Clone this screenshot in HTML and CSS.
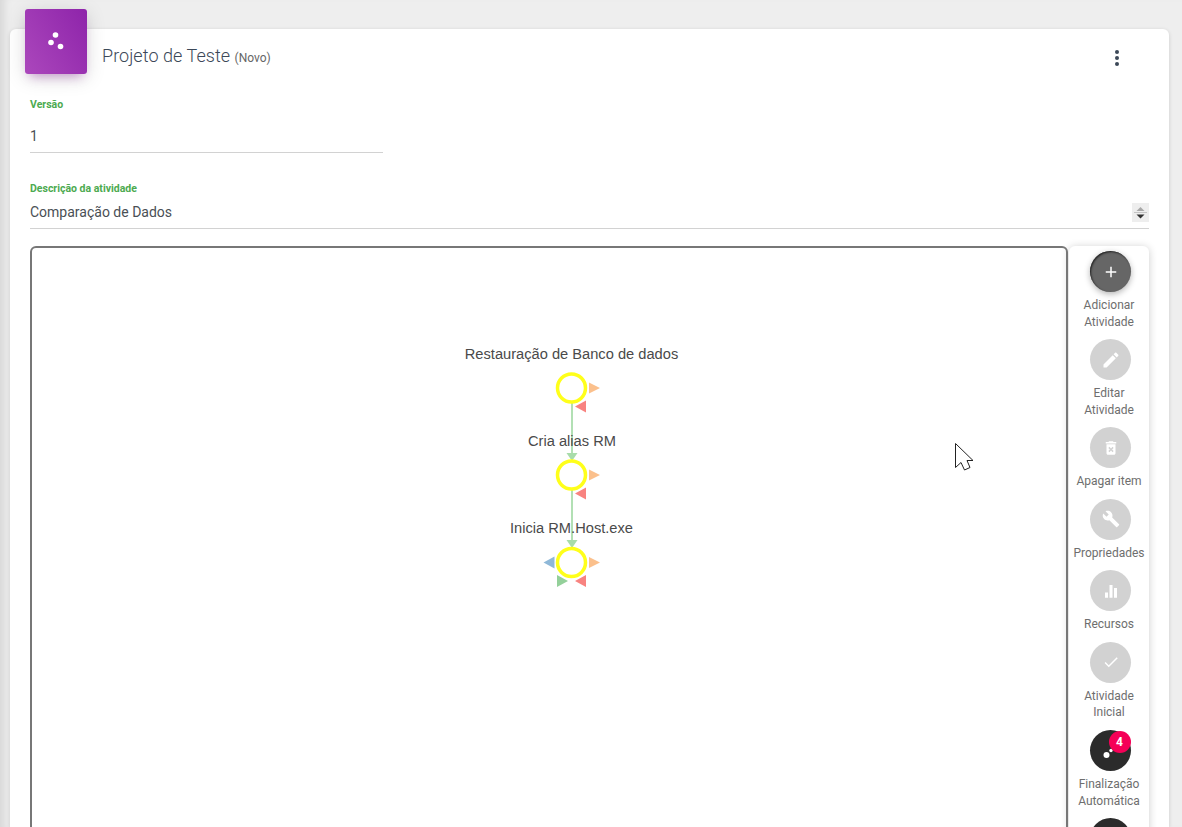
FILE: index.html
```html
<!DOCTYPE html>
<html lang="en">
<head>
    <meta charset="UTF-8">
    <meta name="viewport" content="width=device-width, initial-scale=1.0">
    <title>Projeto de Teste</title>
    <link rel="stylesheet" href="styles.css">
</head>
<body>
    <div class="card">
        <div class="card-header">
            <div class="logo">
                <svg width="62" height="65" viewBox="25 9 62 65">
                    <circle cx="55.500" cy="35" r="2.800" fill="#fff"/>
                    <circle cx="51" cy="42.500" r="2.800" fill="#fff"/>
                    <circle cx="60.500" cy="46.500" r="2.800" fill="#fff"/>
                </svg>
            </div>
            <h1 class="title">Projeto de Teste <small>(Novo)</small></h1>
            <div class="menu-dots"><span></span><span></span><span></span></div>
        </div>

        <div class="field field-version">
            <label>Versão</label>
            <div class="value">1</div>
        </div>

        <div class="field field-desc">
            <label>Descrição da atividade</label>
            <div class="value">Comparação de Dados</div>
            <svg class="spinner" width="17" height="19" viewBox="0 0 17 19">
                <rect width="17" height="19" fill="#eeeeee"/>
                <path d="M8.500 4l4 4h-8z" fill="#a8a8a8"/>
                <rect x="2" y="9" width="13" height="1" fill="#c4c4c4"/>
                <path d="M4.500 11.500h8l-4 4z" fill="#333"/>
            </svg>
        </div>

        <div class="workspace">
            <div class="canvas">
                <!-- viewBox uses page coordinates -->
                <svg class="graph" width="1034" height="579" viewBox="32 248 1034 579">
                    <path d="M572 403V455M572 490V542" class="edge"/>
                    <path d="M566.500 453h11l-5.500 8zM566.500 540h11l-5.500 8z" fill="#a8dcaa"/>

                    <text x="571.500" y="359" class="node-label">Restauração de Banco de dados</text>
                    <text x="572" y="446" class="node-label">Cria alias RM</text>
                    <text x="571.500" y="533" class="node-label">Inicia RM.Host.exe</text>

                    <circle cx="571.500" cy="388" r="14" class="node"/>
                    <circle cx="571.500" cy="475" r="14" class="node"/>
                    <circle cx="571.500" cy="562.500" r="14" class="node"/>

                    <path d="M589 382.500l11 5.500-11 5.500zM589 469.500l11 5.500-11 5.500zM589 557l11 5.500-11 5.500z" fill="#fbc08c"/>
                    <path d="M586 400.500v12l-11-6zM586 487.500v12l-11-6zM586 575v12l-11-6z" fill="#f88380"/>
                    <path d="M554.500 556.500v12l-11-6z" fill="#8fb8d8"/>
                    <path d="M557 575v12l11-6z" fill="#94d09a"/>

                    <path d="M955.500 443.500L973 460.500H967L970 467.500L964.500 470L961 462.500L955.500 467.500Z" fill="#fff" stroke="#222" stroke-width="1"/>
                </svg>
            </div>

            <div class="toolbar">
                <div class="tool">
                    <div class="tool-btn btn-add">
                        <svg width="18" height="18" viewBox="0 0 24 24"><path d="M19 13h-6v6h-2v-6H5v-2h6V5h2v6h6v2z"/></svg>
                    </div>
                    <span>Adicionar Atividade</span>
                </div>
                <div class="tool">
                    <div class="tool-btn">
                        <svg width="20" height="20" viewBox="0 0 24 24"><path d="M3 17.250V21h3.750L17.810 9.940l-3.750-3.750L3 17.250zM20.710 7.040c.39-.39.39-1.020 0-1.410l-2.340-2.340c-.39-.39-1.020-.39-1.410 0l-1.830 1.830 3.750 3.750 1.830-1.830z"/></svg>
                    </div>
                    <span>Editar Atividade</span>
                </div>
                <div class="tool">
                    <div class="tool-btn">
                        <svg width="18" height="18" viewBox="0 0 24 24"><path d="M6 19c0 1.100.9 2 2 2h8c1.100 0 2-.9 2-2V7H6v12zm2.460-7.120l1.410-1.410L12 12.590l2.120-2.120 1.410 1.410L13.410 14l2.120 2.120-1.410 1.410L12 15.410l-2.120 2.120-1.410-1.410L10.590 14l-2.130-2.120zM15.500 4l-1-1h-5l-1 1H5v2h14V4z"/></svg>
                    </div>
                    <span>Apagar item</span>
                </div>
                <div class="tool">
                    <div class="tool-btn">
                        <svg width="18" height="18" viewBox="0 0 24 24"><path d="M22.700 19l-9.100-9.100c.9-2.300.4-5-1.500-6.900-2-2-5-2.400-7.400-1.300L9 6 6 9 1.600 4.700C.4 7.100.9 10.100 2.900 12.100c1.900 1.900 4.600 2.400 6.900 1.500l9.100 9.100c.4.4 1 .4 1.400 0l2.300-2.300c.5-.4.5-1.100.1-1.400z"/></svg>
                    </div>
                    <span>Propriedades</span>
                </div>
                <div class="tool">
                    <div class="tool-btn">
                        <svg width="18" height="18" viewBox="0 0 24 24"><path d="M4 14h4v7H4zM10 4h4v17h-4zM16 8h4v13h-4z"/></svg>
                    </div>
                    <span>Recursos</span>
                </div>
                <div class="tool">
                    <div class="tool-btn">
                        <svg width="18" height="18" viewBox="0 0 24 24"><path d="M9 16.170L4.830 12l-1.420 1.410L9 19 21 7l-1.410-1.410z"/></svg>
                    </div>
                    <span>Atividade Inicial</span>
                </div>
                <div class="tool">
                    <div class="tool-btn btn-dark">
                        <svg width="41" height="41" viewBox="0 0 41 41">
                            <circle cx="16.500" cy="25" r="3"/>
                            <circle cx="21" cy="20.500" r="1.700"/>
                        </svg>
                        <b class="badge">4</b>
                    </div>
                    <span>Finalização Automática</span>
                </div>
                <div class="tool">
                    <div class="tool-btn btn-dark"></div>
                </div>
            </div>
        </div>
    </div>
</body>
</html>
```

FILE: styles.css
```css
html, body {
    height: 827px;
    overflow: hidden;
}

body {
    margin: 0;
    font-family: Roboto, sans-serif;
    background-color: #eeeeee;
    box-shadow: inset 10px 0 8px -6px rgba(0, 0, 0, 0.1);
}

.card {
    position: relative;
    margin: 0 13px 0 10px;
    top: 29px;
    height: 798px;
    padding: 0 20px;
    background: #ffffff;
    border-radius: 6px 6px 0 0;
    box-shadow: 0 1px 4px rgba(0, 0, 0, 0.14);
    box-sizing: border-box;
}

.card-header {
    display: flex;
    height: 68px;
    margin: 0 0 0 -5px;
}

.logo {
    width: 62px;
    height: 65px;
    margin-top: -20px;
    border-radius: 3px;
    background: linear-gradient(60deg, #ab47bc, #8e24aa);
    box-shadow: 0 4px 20px 0 rgba(0, 0, 0, 0.14), 0 7px 10px -5px rgba(156, 39, 176, 0.4);
}

.logo svg {
    display: block;
}

.title {
    margin: 16px 0 0 15px;
    font-size: 18px;
    line-height: 21px;
    font-weight: 300;
    letter-spacing: 0.05px;
    color: #3c4858;
}

.title small {
    font-size: 12px;
    color: #666666;
    font-weight: 400;
    letter-spacing: 0;
}

.menu-dots {
    display: flex;
    flex-direction: column;
    gap: 2px;
    margin: 21px 30px 0 auto;
}

.menu-dots span {
    width: 4px;
    height: 4px;
    border-radius: 50%;
    background: #3c4858;
}

.field {
    position: relative;
    border-bottom: 1px solid #d2d2d2;
    box-sizing: border-box;
}

.field label {
    display: block;
    font-size: 10.500px;
    line-height: 14px;
    font-weight: 700;
    color: #4caa50;
}

.field .value {
    font-size: 14px;
    color: #4a4f55;
}

.field-version {
    width: 353px;
    height: 56px;
    padding-top: 1px;
}

.field-version .value {
    margin-top: 8px;
    line-height: 32px;
}

.field-desc {
    height: 47px;
    margin-top: 29px;
}

.field-desc .value {
    margin-top: 1px;
    line-height: 30px;
}

.spinner {
    position: absolute;
    right: 0;
    top: 21px;
}

.workspace {
    display: flex;
    margin-top: 17px;
}

.canvas {
    position: relative;
    width: 1038px;
    height: 640px;
    border: 2px solid #777777;
    border-radius: 6px;
    box-sizing: border-box;
    flex: none;
}

.graph {
    position: absolute;
    left: 0;
    top: 0;
}

.node-label {
    font-family: "Liberation Sans", Arial, sans-serif;
    font-size: 14.670px;
    fill: #4a4a4a;
    text-anchor: middle;
}

.edge {
    fill: none;
    stroke: #b2e0b4;
    stroke-width: 2;
}

.node {
    fill: none;
    stroke: #ffff1a;
    stroke-width: 3.500;
}

.toolbar {
    width: 80px;
    height: 640px;
    margin-left: 1px;
    padding-top: 5px;
    background: #ffffff;
    border-radius: 6px 6px 0 0;
    box-shadow: 0 1px 8px rgba(0, 0, 0, 0.2);
    box-sizing: border-box;
    flex: none;
}

.tool {
    display: flex;
    flex-direction: column;
    align-items: center;
    padding-bottom: 9.100px;
    font-size: 12px;
    line-height: 16.500px;
    color: #6e6e6e;
    text-align: center;
}

.tool span {
    margin-top: 5px;
}

.tool-btn {
    position: relative;
    display: flex;
    align-items: center;
    justify-content: center;
    width: 41px;
    height: 41px;
    margin-left: 2px;
    padding-left: 1px;
    border-radius: 50%;
    background: #d2d2d2;
    fill: #ffffff;
    box-sizing: border-box;
    flex: none;
}

.btn-add {
    background: #666666;
    box-shadow: inset 1px 1px 2px #222222, 0 2px 6px rgba(0, 0, 0, 0.3);
}

.btn-dark {
    padding-left: 0;
    background: #2b2b2b;
}

.badge {
    position: absolute;
    top: 1px;
    right: 0;
    width: 22px;
    height: 22px;
    border-radius: 50%;
    background: #f50057;
    color: #ffffff;
    font-size: 12px;
    line-height: 22px;
    text-align: center;
}
```
